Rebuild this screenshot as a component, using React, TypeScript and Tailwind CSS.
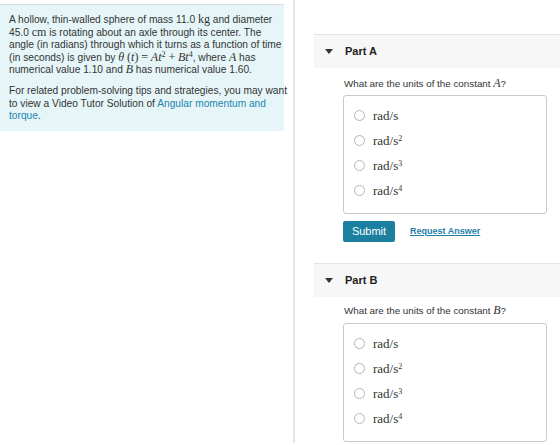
import React from 'react';

function M({ children, italic }: { children: React.ReactNode; italic?: boolean }) {
  return (
    <span className={`font-['Liberation_Serif',serif] text-[12px] leading-[10px] ${italic ? 'italic' : ''}`}>
      {children}
    </span>
  );
}

function Sup({ n }: { n: string }) {
  return <sup className="font-['Liberation_Serif',serif] text-[8px]">{n}</sup>;
}

function Units() {
  const opts = ['', '2', '3', '4'];
  return (
    <div className="ml-[29px] mr-[13px] h-[119px] rounded-[3px] border border-[#c9c9c9] bg-white pl-[10px] pt-[7px]">
      {opts.map((p) => (
        <div key={p} className="flex h-[25px] items-center gap-[8px]">
          <span className="block h-[11px] w-[11px] rounded-full border border-[#b5b5b5] bg-white" />
          <span className="font-['Liberation_Serif',serif] text-[13px] text-[#333]">
            rad/s{p && <sup className="text-[8px]">{p}</sup>}
          </span>
        </div>
      ))}
    </div>
  );
}

function PartHeader({ label }: { label: string }) {
  return (
    <div className="flex h-[34px] items-center border-t border-[#e4e4e4] bg-[#f7f7f7] pl-[11px]">
      <svg width="8" height="5" viewBox="0 0 8 5" className="mr-[12px]">
        <path d="M0 0 L8 0 L4 5 Z" fill="#333" />
      </svg>
      <span className="text-[11px] font-bold text-[#222]">{label}</span>
    </div>
  );
}

export default function App() {
  return (
    <div className="flex h-[445px] w-[560px] overflow-hidden bg-white font-['Liberation_Sans',Arial,sans-serif] text-[#333]">
      <div className="w-[293px] shrink-0 pt-[4px]">
        <div className="w-[284px] whitespace-nowrap border-t border-[#dedede] bg-[#e6f6f8] pb-[8px] pl-[9px] pt-[9px] text-[10.2px] leading-[12.6px] text-[#333]">
          <p>
            A hollow, thin-walled sphere of mass 11.0 <M>kg</M> and diameter
            <br />
            45.0 <M>cm</M> is rotating about an axle through its center. The
            <br />
            angle (in radians) through which it turns as a function of time
            <br />
            (in seconds) is given by <M italic>θ</M> <M>(</M><M italic>t</M><M>)</M> <M>=</M> <M italic>At</M><Sup n="2" /> <M>+</M> <M italic>Bt</M><Sup n="4" />, where <M italic>A</M> has
            <br />
            numerical value 1.10 and <M italic>B</M> has numerical value 1.60.
          </p>
          <p className="mt-[8px]">
            For related problem-solving tips and strategies, you may want
            <br />
            to view a Video Tutor Solution of{' '}
            <span className="text-[#1d84b0]">Angular momentum and</span>
            <br />
            <span className="text-[#1d84b0]">torque</span>.
          </p>
        </div>
      </div>
      <div className="h-[443px] w-[2px] shrink-0 bg-[#dfe5ee]" />
      <div className="flex-1 pl-[19px] pt-[34px]">
        <PartHeader label="Part A" />
        <p className="ml-[30px] mt-[9px] text-[9.8px] leading-[14px] text-[#333]">
          What are the units of the constant <M italic>A</M>?
        </p>
        <div className="mt-[4px]">
          <Units />
        </div>
        <div className="ml-[29px] mt-[7px] flex items-center gap-[15px]">
          <button className="h-[21px] w-[52px] rounded-[2px] bg-[#1b7f9f] text-[11px] text-white">Submit</button>
          <span className="text-[9px] font-bold text-[#1f7fa8] underline">Request Answer</span>
        </div>
        <div className="mt-[21px]">
          <PartHeader label="Part B" />
        </div>
        <p className="ml-[30px] mt-[7px] text-[9.8px] leading-[14px] text-[#333]">
          What are the units of the constant <M italic>B</M>?
        </p>
        <div className="mt-[5px]">
          <Units />
        </div>
      </div>
    </div>
  );
}
